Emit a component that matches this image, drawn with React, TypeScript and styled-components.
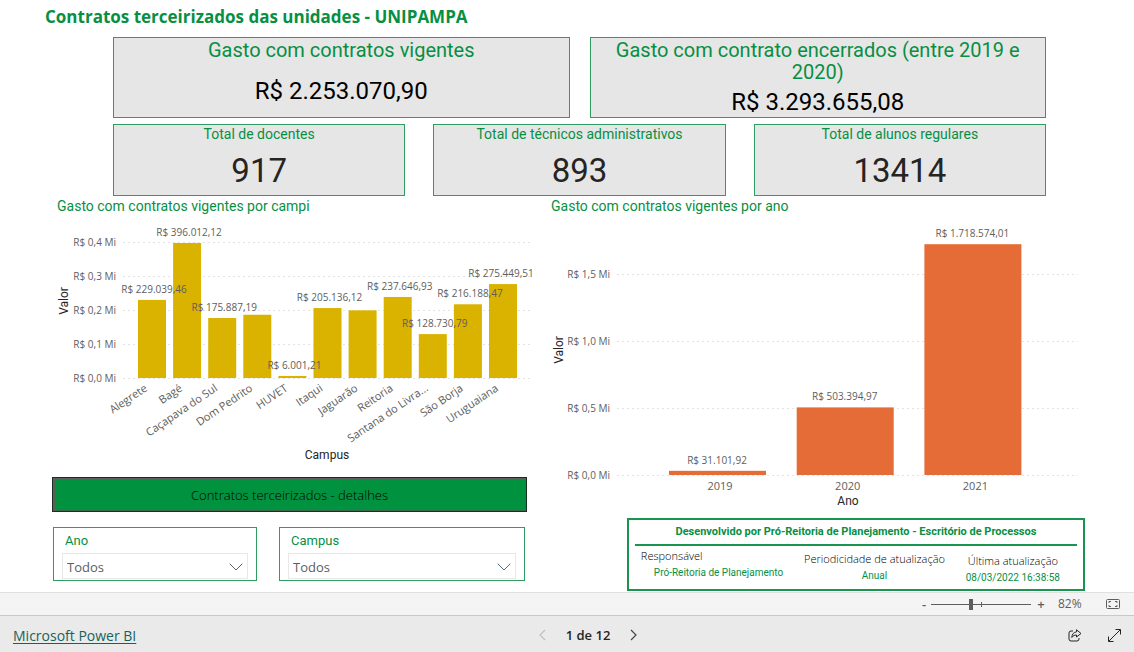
import React from "react";
import styled, { createGlobalStyle } from "styled-components";

const GREEN = "#078f43";
const BORDER = "#2f9d62";
const sans = `"Open Sans", "Noto Sans", sans-serif`;
const din = `Roboto, "Liberation Sans", sans-serif`;

const GlobalStyle = createGlobalStyle`
  *, *::before, *::after { box-sizing: border-box; }
  body { margin: 0; background: #fff; font-family: ${sans}; color: #252423; }
  h1, h2, p, dl, dt, dd { margin: 0; font-weight: 400; }
`;

const Page = styled.div`
  min-height: 100vh;
  display: flex;
  flex-direction: column;
`;

const Report = styled.main`
  flex: 1;
  padding: 5px 49px 0 52px;
`;

const Title = styled.h1`
  margin-left: -7px;
  padding-bottom: 8px;
  font: 700 17px/24px ${sans};
  color: ${GREEN};
`;

const Cards = styled.div`
  display: grid;
  gap: 6px;
  margin: 0 39px 2px 61px;
`;

const CardRow = styled.div<{ $columns: number; $gap: number }>`
  display: grid;
  grid-template-columns: repeat(${(p) => p.$columns}, 1fr);
  gap: ${(p) => p.$gap}px;
`;

const Card = styled.section<{ $tall?: boolean }>`
  min-height: ${(p) => (p.$tall ? 81 : 72)}px;
  display: flex;
  flex-direction: column;
  align-items: center;
  border: 1px solid ${BORDER};
  background: #e6e6e6;
  text-align: center;
`;

const CardLabel = styled.h2<{ $large?: boolean }>`
  padding: ${(p) => (p.$large ? "1px 8px 0" : "0 8px")};
  font: 400 ${(p) => (p.$large ? "20px/22px" : "14px/18px")} ${din};
  color: ${GREEN};
`;

const CardValue = styled.p<{ $large?: boolean }>`
  flex: 1;
  display: flex;
  align-items: center;
  padding-top: 4px;
  font: 400 ${(p) => (p.$large ? "33px/36px" : "24px/28px")} ${din};
  color: ${(p) => (p.$large ? "#252423" : "#000")};
`;

const Columns = styled.div`
  display: grid;
  grid-template-columns: 480fr 539fr;
  gap: 14px;
`;

const Panel = styled.div`
  display: flex;
  flex-direction: column;
`;

const ChartTitle = styled.h2`
  padding: 0 0 6px 5px;
  font: 400 14px/16px ${din};
  color: ${GREEN};
`;

const Chart = styled.svg`
  display: block;
  width: 100%;
  height: auto;
  overflow: visible;
`;

const AxisText = styled.text`
  font: 400 10px ${sans};
  fill: #605e5c;
`;

const CategoryText = styled.text`
  font: 400 11px ${sans};
  fill: #605e5c;
`;

const AxisTitle = styled.text`
  font: 400 12px ${din};
  fill: #252423;
  text-anchor: middle;
`;

const GridLine = styled.line`
  stroke: #e3e3e3;
  stroke-width: 1;
  stroke-dasharray: 2 3;
`;

const DetailsButton = styled.button`
  height: 35px;
  margin: 9px 5px 15px 0;
  border: 1px solid #17301f;
  box-shadow: inset 2px 2px #5a5f5a, inset -1px -1px #3c6b4c;
  background: #00923f;
  font: 300 13px/18px ${sans};
  color: #000;
`;

const Slicers = styled.div`
  display: grid;
  grid-template-columns: 204fr 246fr;
  gap: 22px;
  margin: 0 7px 0 1px;
`;

const Slicer = styled.div`
  height: 54px;
  padding: 5px 8px 0;
  border: 1px solid ${BORDER};
`;

const SlicerLabel = styled.label`
  display: block;
  padding: 0 3px 4px;
  font: 400 13px/16px ${din};
  color: ${GREEN};
`;

const SelectBox = styled.div`
  position: relative;
  height: 26px;
  border: 1px solid #e8e8e8;
`;

const Select = styled.select`
  appearance: none;
  width: 100%;
  height: 100%;
  padding: 2px 24px 0 4px;
  border: 0;
  background: transparent;
  font: 400 13px/20px ${sans};
  color: #605e5c;
`;

const SelectArrow = styled.svg`
  position: absolute;
  right: 4px;
  top: 9px;
  pointer-events: none;
`;

const Credits = styled.section`
  width: 85%;
  height: 73px;
  margin: 8px 0 0 auto;
  padding: 0 6px;
  border: 2px solid #1a9550;
`;

const CreditsTitle = styled.h2`
  height: 26px;
  border-bottom: 2px solid #1a9550;
  font: 700 11px/24px ${din};
  color: ${GREEN};
  text-align: center;
  white-space: nowrap;
`;

const CreditsList = styled.dl`
  height: 42px;
  display: flex;
  justify-content: space-between;
  padding: 1px 17px 2px 6px;
`;

const Credit = styled.div<{ $align: "start" | "center" | "end" }>`
  align-self: ${(p) => p.$align};
  text-align: center;
  white-space: nowrap;
`;

const CreditLabel = styled.dt<{ $left?: boolean }>`
  font: 300 11px/17px ${sans};
  color: #000;
  text-align: ${(p) => (p.$left ? "left" : "center")};
`;

const CreditValue = styled.dd<{ $indent?: boolean }>`
  padding-left: ${(p) => (p.$indent ? 13 : 0)}px;
  font: 400 10px/17px ${din};
  color: ${GREEN};
`;

const ZoomBar = styled.div`
  height: 24px;
  display: flex;
  align-items: center;
  justify-content: flex-end;
  padding-right: 14px;
  border-top: 1px solid #e0e0e0;
  border-bottom: 1px solid #c8c8c8;
  background: #f4f4f4;
  color: #605e5c;
`;

const PlainButton = styled.button`
  display: flex;
  align-items: center;
  justify-content: center;
  padding: 0;
  border: 0;
  background: none;
  color: inherit;
`;

const StepButton = styled(PlainButton)`
  width: 14px;
  font: 600 13px/16px ${sans};
`;

const ZoomSlider = styled.input`
  appearance: none;
  width: 100px;
  height: 12px;
  margin: 0 3px 0 0;
  background:
    linear-gradient(#605e5c, #605e5c) 50px 50% / 1px 5px no-repeat,
    linear-gradient(#605e5c, #605e5c) 0 50% / 100% 1px no-repeat;
  &::-webkit-slider-thumb {
    appearance: none;
    width: 4px;
    height: 11px;
    background: #605e5c;
  }
`;

const ZoomValue = styled.span`
  width: 24px;
  margin: 0 24px 0 10px;
  font: 400 12px/16px ${sans};
  white-space: nowrap;
`;

const Footer = styled.footer`
  height: 36px;
  display: grid;
  grid-template-columns: 1fr auto 1fr;
  align-items: center;
  padding: 0 13px;
  background: #eaeaea;
`;

const BrandLink = styled.a`
  justify-self: start;
  padding-top: 3px;
  font: 400 14px/18px ${sans};
  color: #17635a;
  text-decoration: underline;
  text-underline-offset: 2px;
`;

const Pager = styled.nav`
  display: flex;
  align-items: center;
  gap: 20px;
  padding-top: 2px;
  margin-left: 42px;
  font: 600 13px/18px ${sans};
  color: #252423;
`;

const Tools = styled.div`
  display: flex;
  gap: 26px;
  justify-self: end;
  padding-top: 2px;
`;

const campi = [
  { name: "Alegrete", value: 229.039, label: "R$ 229.039,46" },
  { name: "Bagé", value: 396.012, label: "R$ 396.012,12" },
  { name: "Caçapava do Sul", value: 175.887, label: "R$ 175.887,19" },
  { name: "Dom Pedrito", value: 185.5 },
  { name: "HUVET", value: 6.001, label: "R$ 6.001,21" },
  { name: "Itaqui", value: 205.136, label: "R$ 205.136,12" },
  { name: "Jaguarão", value: 198.5 },
  { name: "Reitoria", value: 237.647, label: "R$ 237.646,93" },
  { name: "Santana do Livra...", value: 128.731, label: "R$ 128.730,79" },
  { name: "São Borja", value: 216.188, label: "R$ 216.188,47" },
  { name: "Uruguaiana", value: 275.45, label: "R$ 275.449,51" },
];

const years = [
  { name: "2019", value: 31.102, label: "R$ 31.101,92" },
  { name: "2020", value: 503.395, label: "R$ 503.394,97" },
  { name: "2021", value: 1718.574, label: "R$ 1.718.574,01" },
];

function CampusChart() {
  const base = 158;
  const plotRight = 478;
  const labelHalf = 31;
  const height = (v: number) => v * 0.341;
  const center = (i: number) => 100 + i * 35.1;
  return (
    <Chart viewBox="0 0 480 248" role="img" aria-label="Gasto com contratos vigentes por campi">
      {["0,0", "0,1", "0,2", "0,3", "0,4"].map((t, i) => (
        <g key={t}>
          <GridLine x1={71} x2={plotRight} y1={base + 0.5 - Math.round(height(i * 100))} y2={base + 0.5 - Math.round(height(i * 100))} />
          <AxisText x={64} y={base + 4 - height(i * 100)} textAnchor="end">{`R$ ${t} Mi`}</AxisText>
        </g>
      ))}
      {campi.map((c, i) => (
        <rect key={c.name} x={center(i) - 14} y={base - height(c.value)} width={28} height={height(c.value)} fill="#d9b300" />
      ))}
      {campi.map((c, i) => (
        <g key={c.name}>
          {c.label && (
            <AxisText x={Math.min(center(i) + 2, plotRight - labelHalf + 2)} y={base - 7 - height(c.value)} textAnchor="middle">{c.label}</AxisText>
          )}
          <CategoryText textAnchor="end" transform={`translate(${center(i) - 4} ${base + 12}) rotate(-34)`}>{c.name}</CategoryText>
        </g>
      ))}
      <AxisTitle transform="translate(16 81) rotate(-90)">Valor</AxisTitle>
      <AxisTitle x={275} y={239}>Campus</AxisTitle>
    </Chart>
  );
}

function YearChart() {
  const base = 255;
  const height = (v: number) => v * 0.1343;
  const center = (i: number) => 171 + i * 127.7;
  return (
    <Chart viewBox="0 0 539 290" role="img" aria-label="Gasto com contratos vigentes por ano">
      {["0,0", "0,5", "1,0", "1,5"].map((t, i) => (
        <g key={t}>
          <GridLine x1={71} x2={532} y1={base + 0.5 - Math.round(height(i * 500))} y2={base + 0.5 - Math.round(height(i * 500))} />
          <AxisText x={64} y={base + 4 - height(i * 500)} textAnchor="end">{`R$ ${t} Mi`}</AxisText>
        </g>
      ))}
      {years.map((c, i) => (
        <g key={c.name}>
          <rect x={center(i) - 48} y={base - height(c.value)} width={97} height={height(c.value)} fill="#e66c37" />
          <AxisText x={center(i)} y={base - 7 - height(c.value)} textAnchor="middle">{c.label}</AxisText>
          <CategoryText x={center(i) + 3} y={base + 15} textAnchor="middle">{c.name}</CategoryText>
        </g>
      ))}
      <AxisTitle transform="translate(17 130) rotate(-90)">Valor</AxisTitle>
      <AxisTitle x={302} y={285}>Ano</AxisTitle>
    </Chart>
  );
}

function SlicerField({ id, label, stroke }: { id: string; label: string; stroke: string }) {
  return (
    <Slicer>
      <SlicerLabel htmlFor={id}>{label}</SlicerLabel>
      <SelectBox>
        <Select id={id} defaultValue="Todos">
          <option>Todos</option>
        </Select>
        <SelectArrow width="14" height="8" viewBox="0 0 14 8" fill="none" stroke={stroke}>
          <path d="M.7.7 7 7 13.3.7" />
        </SelectArrow>
      </SelectBox>
    </Slicer>
  );
}

export default function App() {
  return (
    <Page>
      <GlobalStyle />
      <Report>
        <Title>Contratos terceirizados das unidades - UNIPAMPA</Title>
        <Cards>
          <CardRow $columns={2} $gap={20}>
            <Card $tall>
              <CardLabel $large>Gasto com contratos vigentes</CardLabel>
              <CardValue>R$ 2.253.070,90</CardValue>
            </Card>
            <Card $tall>
              <CardLabel $large>Gasto com contrato encerrados (entre 2019 e 2020)</CardLabel>
              <CardValue>R$ 3.293.655,08</CardValue>
            </Card>
          </CardRow>
          <CardRow $columns={3} $gap={28}>
            <Card>
              <CardLabel>Total de docentes</CardLabel>
              <CardValue $large>917</CardValue>
            </Card>
            <Card>
              <CardLabel>Total de técnicos administrativos</CardLabel>
              <CardValue $large>893</CardValue>
            </Card>
            <Card>
              <CardLabel>Total de alunos regulares</CardLabel>
              <CardValue $large>13414</CardValue>
            </Card>
          </CardRow>
        </Cards>
        <Columns>
          <Panel>
            <ChartTitle>Gasto com contratos vigentes por campi</ChartTitle>
            <CampusChart />
            <DetailsButton type="button">Contratos terceirizados - detalhes</DetailsButton>
            <Slicers>
              <SlicerField id="ano" label="Ano" stroke="#605e5c" />
              <SlicerField id="campus" label="Campus" stroke="#47708a" />
            </Slicers>
          </Panel>
          <Panel>
            <ChartTitle>Gasto com contratos vigentes por ano</ChartTitle>
            <YearChart />
            <Credits>
              <CreditsTitle>Desenvolvido por Pró-Reitoria de Planejamento - Escritório de Processos</CreditsTitle>
              <CreditsList>
                <Credit $align="start">
                  <CreditLabel $left>Responsável</CreditLabel>
                  <CreditValue $indent>Pró-Reitoria de Planejamento</CreditValue>
                </Credit>
                <Credit $align="center">
                  <CreditLabel>Periodicidade de atualização</CreditLabel>
                  <CreditValue>Anual</CreditValue>
                </Credit>
                <Credit $align="end">
                  <CreditLabel>Última atualização</CreditLabel>
                  <CreditValue>08/03/2022 16:38:58</CreditValue>
                </Credit>
              </CreditsList>
            </Credits>
          </Panel>
        </Columns>
      </Report>
      <ZoomBar>
        <StepButton type="button" aria-label="Reduzir">-</StepButton>
        <ZoomSlider type="range" min={0} max={100} defaultValue={40} aria-label="Zoom" />
        <StepButton type="button" aria-label="Ampliar">+</StepButton>
        <ZoomValue>82%</ZoomValue>
        <PlainButton type="button" aria-label="Ajustar à página">
          <svg width="14" height="10" viewBox="0 0 14 10" fill="none" stroke="#605e5c">
            <rect x=".5" y=".5" width="13" height="9" rx="1" />
            <path d="M3 4V2.500h2M9 2.500h2V4M11 6v1.500H9M5 7.500H3V6" />
          </svg>
        </PlainButton>
      </ZoomBar>
      <Footer>
        <BrandLink href="#powerbi">Microsoft Power BI</BrandLink>
        <Pager>
          <PlainButton type="button" aria-label="Página anterior" disabled>
            <svg width="7" height="12" viewBox="0 0 7 12" fill="none" stroke="#c0c0c0" strokeWidth="1.2">
              <path d="M6 1 1 6l5 5" />
            </svg>
          </PlainButton>
          <span>1 de 12</span>
          <PlainButton type="button" aria-label="Próxima página">
            <svg width="7" height="12" viewBox="0 0 7 12" fill="none" stroke="#444" strokeWidth="1.2">
              <path d="m1 1 5 5-5 5" />
            </svg>
          </PlainButton>
        </Pager>
        <Tools>
          <PlainButton type="button" aria-label="Compartilhar">
            <svg width="14" height="13" viewBox="0 0 14 13" fill="none" stroke="#252423" strokeLinejoin="round">
              <path d="M5 2H3a2 2 0 0 0-2 2v6a2 2 0 0 0 2 2h6a2 2 0 0 0 2-2V9" />
              <path d="M8.500.8 13 4.500 8.500 8V6C6.500 6 5 6.700 3.800 8.500 4 5.200 5.600 3.200 8.500 2.900Z" />
            </svg>
          </PlainButton>
          <PlainButton type="button" aria-label="Tela inteira">
            <svg width="13" height="13" viewBox="0 0 13 13" fill="none" stroke="#252423">
              <path d="M.8 12.200 12.200.8M7.500.5h5v5M.5 7.500v5h5" />
            </svg>
          </PlainButton>
        </Tools>
      </Footer>
    </Page>
  );
}
